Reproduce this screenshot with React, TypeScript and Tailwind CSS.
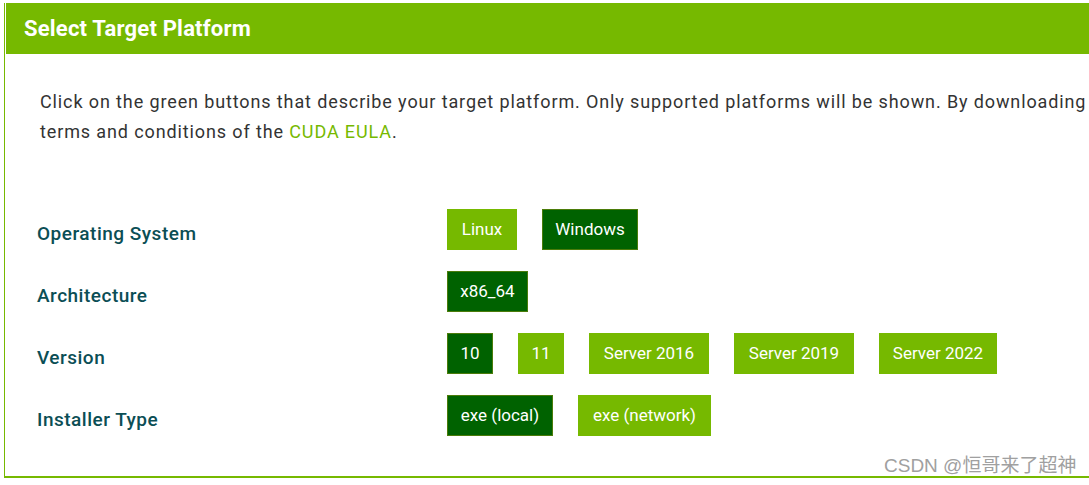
import React from 'react';

type Opt = { label: string; w: string; active?: boolean };

const rows: { name: string; options: Opt[] }[] = [
  {
    name: 'Operating System',
    options: [
      { label: 'Linux', w: 'w-[70px]' },
      { label: 'Windows', w: 'w-[96px]', active: true },
    ],
  },
  {
    name: 'Architecture',
    options: [{ label: 'x86_64', w: 'w-[81px]', active: true }],
  },
  {
    name: 'Version',
    options: [
      { label: '10', w: 'w-[46px]', active: true },
      { label: '11', w: 'w-[46px]' },
      { label: 'Server 2016', w: 'w-[120px]' },
      { label: 'Server 2019', w: 'w-[120px]' },
      { label: 'Server 2022', w: 'w-[118px]' },
    ],
  },
  {
    name: 'Installer Type',
    options: [
      { label: 'exe (local)', w: 'w-[106px]', active: true },
      { label: 'exe (network)', w: 'w-[133px]' },
    ],
  },
];

export default function App() {
  return (
    <div className="relative w-[1089px] h-[485px] overflow-hidden bg-white font-['Roboto',sans-serif]">
      <div className="ml-[4px] mt-[3px] w-[1100px] border-l border-b-2 border-[#76b900] pl-px pb-[40px]">
        <div className="h-[51px] bg-[#76b900] px-[18px] flex items-center">
          <h2 className="text-white text-[22px] font-bold tracking-[0.2px]">Select Target Platform</h2>
        </div>

        <p className="mt-[33px] ml-[34px] text-[18px] leading-[30px] text-[#333] tracking-[0.88px] whitespace-nowrap">
          Click on the green buttons that describe your target platform. Only supported platforms will be shown. By downloading
          <br />
          terms and conditions of the <span className="text-[#76b900]">CUDA EULA</span>.
        </p>

        <div className="mt-[62px] ml-[31px] flex flex-col gap-[21px]">
          {rows.map(row => (
            <div key={row.name} className="flex items-center h-[41px]">
              <div className="w-[410px] pt-[10px] text-[19px] font-medium text-[#0b4e55] tracking-[0.5px]">
                {row.name}
              </div>
              <div className="flex gap-[25px]">
                {row.options.map(opt => (
                  <button
                    key={opt.label}
                    className={`${opt.w} h-[41px] flex items-center justify-center text-white text-[17px] border ${
                      opt.active ? 'bg-[#006200] border-[#4b7c0a]' : 'bg-[#76b900] border-[#76b900]'
                    }`}
                  >
                    {opt.label}
                  </button>
                ))}
              </div>
            </div>
          ))}
        </div>
      </div>

      <div className="absolute left-[884px] top-[452px] text-[19px] text-[#a0a0a0] font-['Liberation_Sans','Noto_Sans_CJK_SC',sans-serif]">
        CSDN @恒哥来了超神
      </div>
    </div>
  );
}
